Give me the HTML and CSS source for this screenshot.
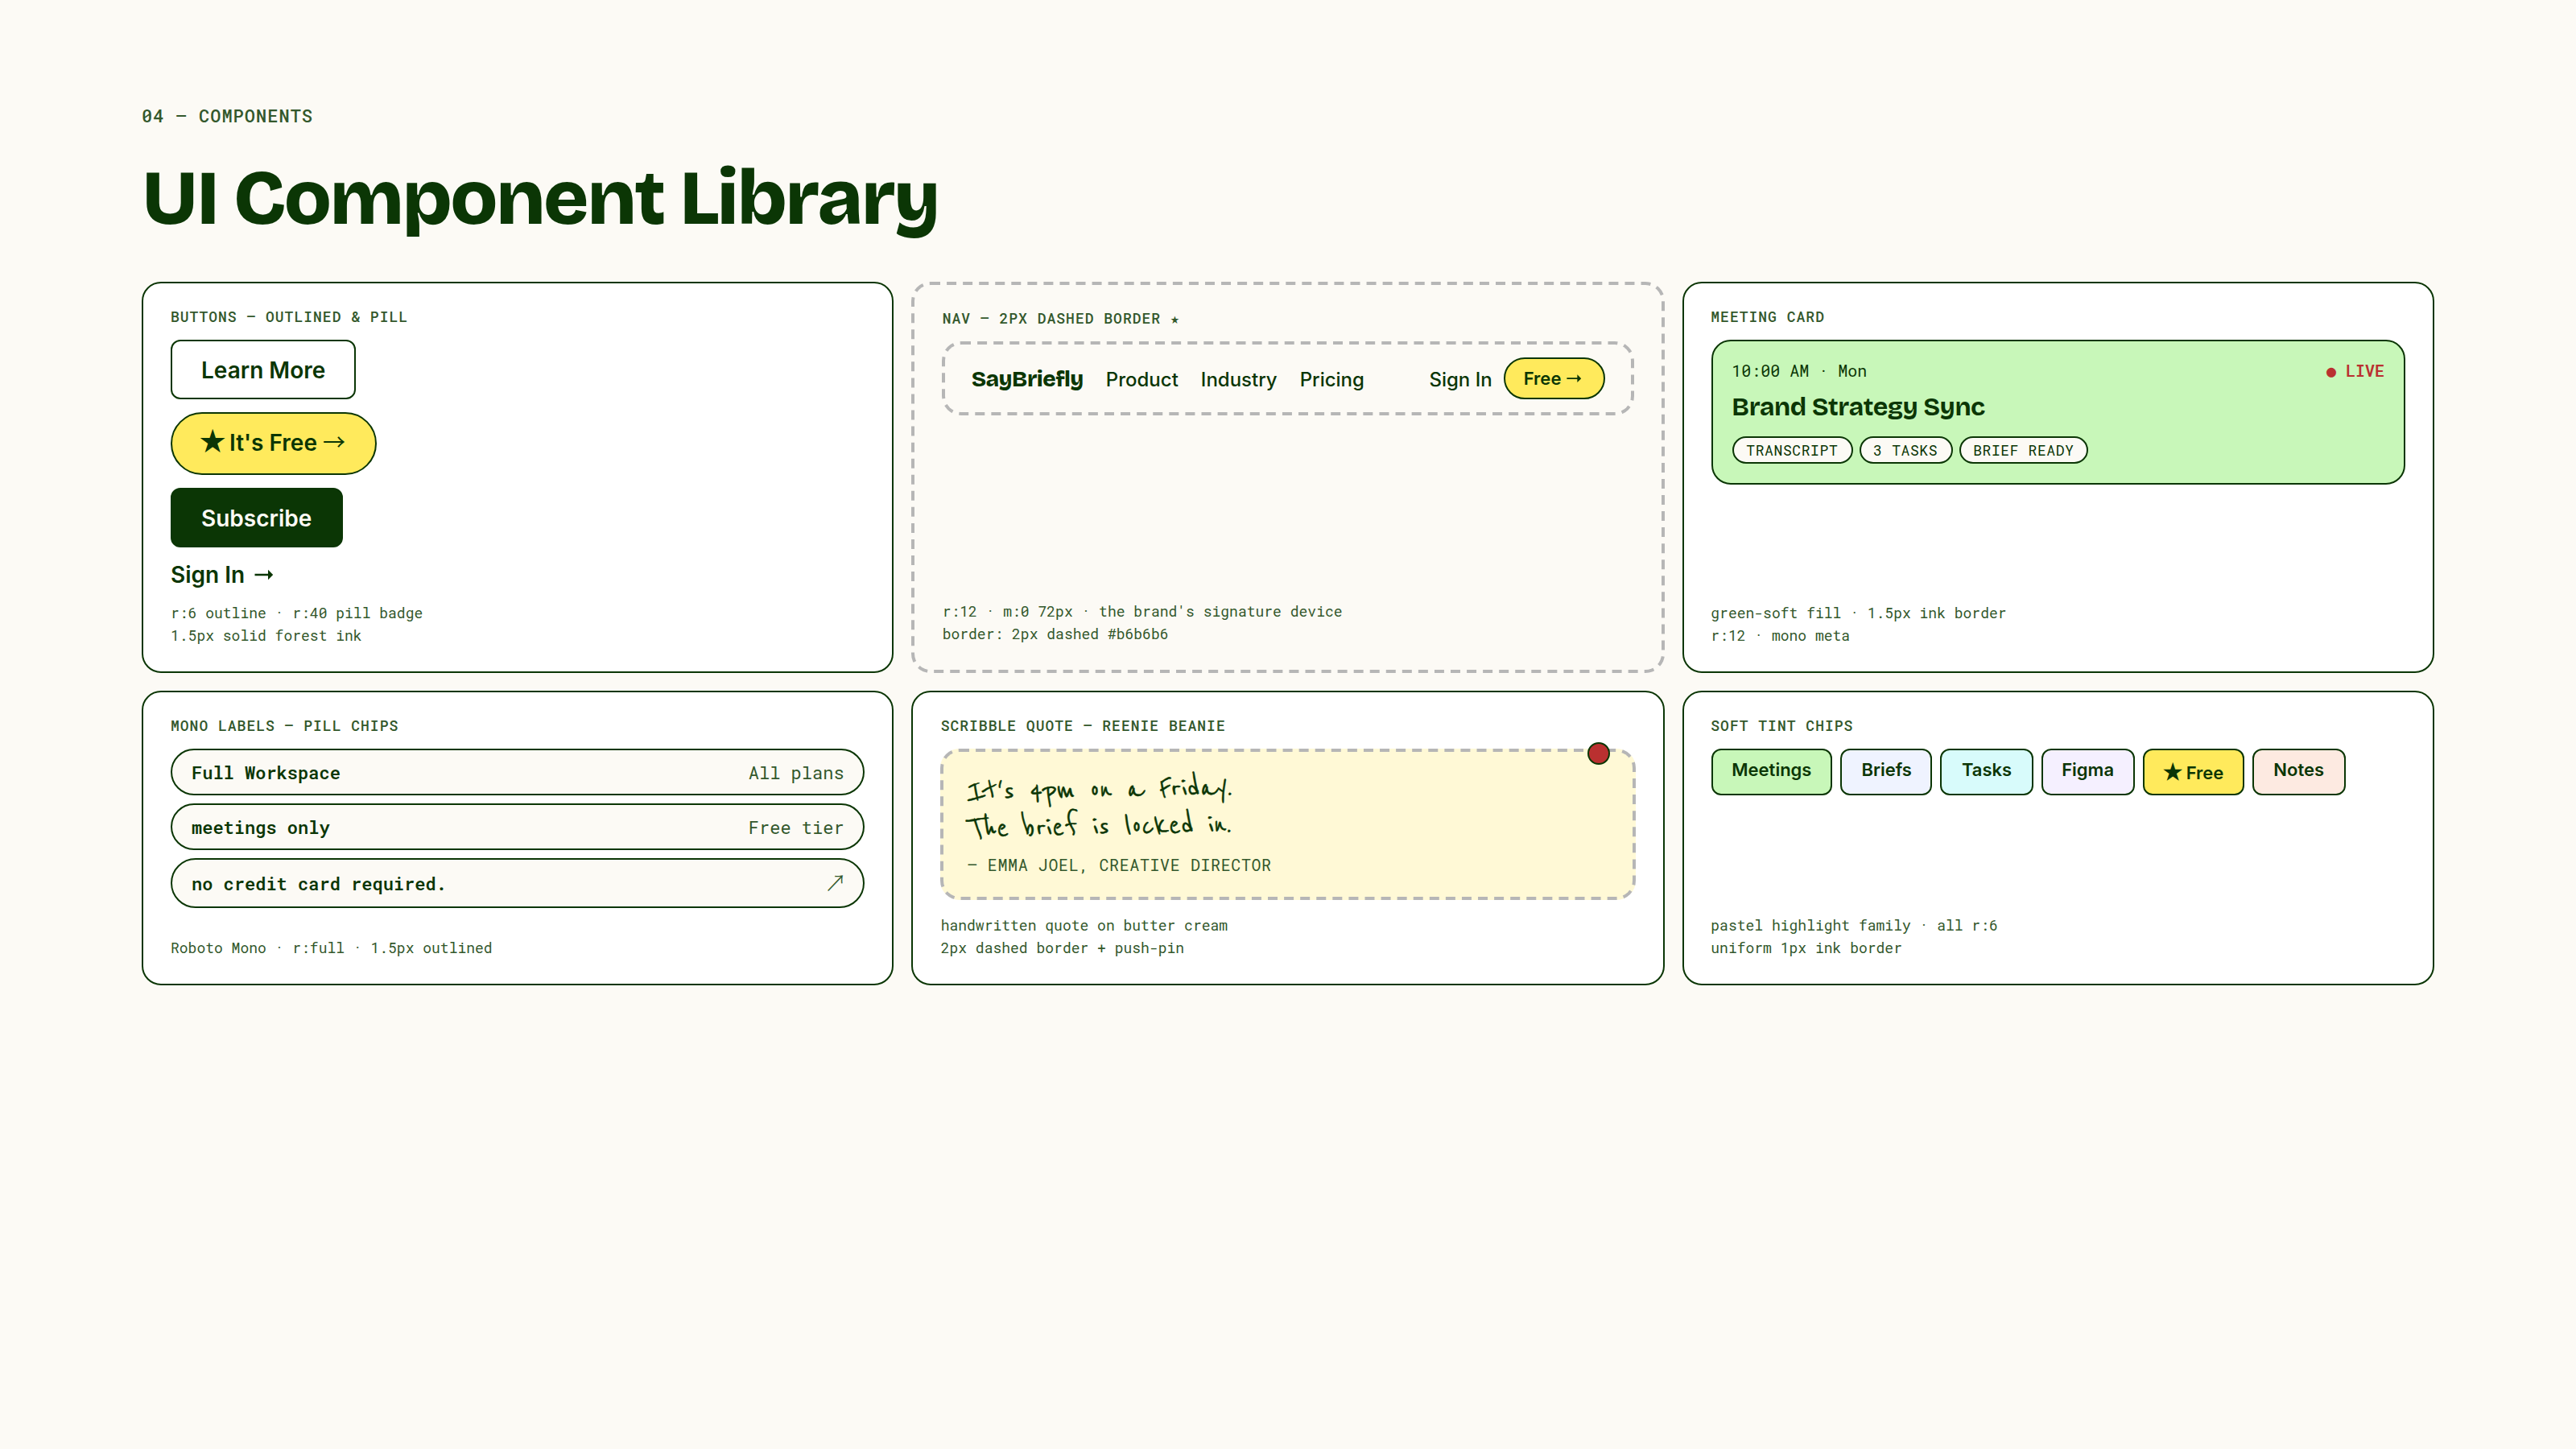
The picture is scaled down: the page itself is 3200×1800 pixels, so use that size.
FILE: index.html
```
<!DOCTYPE html>
<html lang="en">
<head>
    <meta charset="UTF-8">
    <meta name="viewport" content="width=device-width, initial-scale=1.0">
    <title>UI Component Library</title>
    <link rel="stylesheet" href="styles.css">
</head>
<body>
    <div class="page">
        <div class="eyebrow">04 — COMPONENTS</div>
        <h1>UI Component Library</h1>

        <div class="grid">
            <div class="card">
                <div class="label">BUTTONS — OUTLINED &amp; PILL</div>
                <div class="buttons">
                    <a class="btn">Learn More</a>
                    <a class="btn btn-pill"><span class="star">★</span> It's Free <span class="thin-arrow">→</span></a>
                    <a class="btn btn-solid">Subscribe</a>
                    <a class="btn-link">Sign In<svg class="arrow" viewBox="0 0 28 28"><path d="M0.5 16.8H17V11.7L23.2 18L17 24.3V19.2H0.5Z"/></svg></a>
                </div>
                <div class="note">r:6 outline · r:40 pill badge<br>1.5px solid forest ink</div>
            </div>

            <div class="card card-dashed">
                <div class="label">NAV — 2PX DASHED BORDER ★</div>
                <nav class="nav">
                    <span class="logo">SayBriefly</span>
                    <a>Product</a>
                    <a>Industry</a>
                    <a>Pricing</a>
                    <div class="nav-right">
                        <a>Sign In</a>
                        <a class="nav-pill">Free <svg class="arrow" viewBox="0 0 28 28"><path d="M0.5 16.8H17V11.7L23.2 18L17 24.3V19.2H0.5Z"/></svg></a>
                    </div>
                </nav>
                <div class="note">r:12 · m:0 72px · the brand's signature device<br>border: 2px dashed #b6b6b6</div>
            </div>

            <div class="card">
                <div class="label">MEETING CARD</div>
                <div class="meeting">
                    <div class="meeting-top">
                        <span>10:00 AM · Mon</span>
                        <span class="live">● LIVE</span>
                    </div>
                    <div class="meeting-title">Brand Strategy Sync</div>
                    <div class="tags">
                        <span class="tag">TRANSCRIPT</span>
                        <span class="tag">3 TASKS</span>
                        <span class="tag">BRIEF READY</span>
                    </div>
                </div>
                <div class="note">green-soft fill · 1.5px ink border<br>r:12 · mono meta</div>
            </div>

            <div class="card">
                <div class="label">MONO LABELS — PILL CHIPS</div>
                <div class="rows">
                    <div class="row"><b>Full Workspace</b><span>All plans</span></div>
                    <div class="row"><b>meetings only</b><span>Free tier</span></div>
                    <div class="row row-tall"><b>no credit card required.</b><span class="corner">↗</span></div>
                </div>
                <div class="note">Roboto Mono · r:full · 1.5px outlined</div>
            </div>

            <div class="card">
                <div class="label">SCRIBBLE QUOTE — REENIE BEANIE</div>
                <div class="quote">
                    <span class="pin"></span>
                    <div class="scribble">It's 4pm on a Friday.<br>The brief is locked in.</div>
                    <div class="author">— EMMA JOEL, CREATIVE DIRECTOR</div>
                </div>
                <div class="note">handwritten quote on butter cream<br>2px dashed border + push-pin</div>
            </div>

            <div class="card">
                <div class="label">SOFT TINT CHIPS</div>
                <div class="chips">
                    <span class="chip green">Meetings</span>
                    <span class="chip blue">Briefs</span>
                    <span class="chip cyan">Tasks</span>
                    <span class="chip violet">Figma</span>
                    <span class="chip yellow"><span class="star">★</span> Free</span>
                    <span class="chip peach">Notes</span>
                </div>
                <div class="note">pastel highlight family · all r:6<br>uniform 1px ink border</div>
            </div>
        </div>
    </div>
</body>
</html>
```
FILE: styles.css
```
:root {
    --ink: #0b3605;
    --ink-soft: #33582c;
    --paper: #fcfaf5;
    --yellow: #ffea5c;
    --green: #c8f7b9;
    --red: #ba3030;
    --dash: #b6b6b6;
    --mono: "Roboto Mono", "DejaVu Sans Mono", monospace;
    --sans: Inter, sans-serif;
    --display: "Bricolage Grotesque", Inter, sans-serif;
    --symbols: "Noto Sans CJK JP", sans-serif;
}

* {
    box-sizing: border-box;
}

body {
    margin: 0;
    height: 1800px;
    background: var(--paper);
}

/* 1600x900 board, shown at double size */
.page {
    width: 1600px;
    height: 900px;
    padding: 64px 88px 0;
    transform: scale(2);
    transform-origin: 0 0;
    color: var(--ink);
    font-family: var(--sans);
}

.eyebrow {
    font-family: var(--mono);
    font-size: 11px;
    font-weight: 500;
    letter-spacing: 0.5px;
    line-height: 15px;
    color: var(--ink-soft);
}

h1 {
    margin: 20px 0 0;
    height: 76px;
    font-family: var(--display);
    font-size: 48px;
    font-weight: 800;
    line-height: 48px;
    letter-spacing: -1.2px;
    white-space: nowrap;
}

.grid {
    display: grid;
    grid-template-columns: repeat(3, 1fr);
    gap: 11px;
}

.card {
    display: flex;
    flex-direction: column;
    gap: 8px;
    padding: 15px 17px;
    border: 1px solid var(--ink);
    border-radius: 12px;
    background: #fff;
}

.card-dashed {
    border: 2px dashed var(--dash);
    background: var(--paper);
}

.label {
    font-family: var(--mono);
    font-size: 9px;
    font-weight: 500;
    line-height: 12px;
    letter-spacing: 0.5px;
    color: var(--ink-soft);
}

.note {
    margin-top: auto;
    padding-top: 0.8px;
    font-family: var(--mono);
    font-size: 9px;
    line-height: 14px;
    color: var(--ink-soft);
}

/* symbols */
.star {
    margin: 0 -0.075em 0 -0.07em;
    font-family: var(--symbols);
    font-size: 1.17em;
    line-height: 0;
}

.thin-arrow {
    font-family: var(--symbols);
    font-weight: 400;
    line-height: 0;
}

.corner {
    margin-right: -1.5px;
    font-family: var(--symbols);
    font-size: 14px;
    font-weight: 300;
    line-height: 0;
}

.arrow {
    width: 1em;
    height: 1em;
    fill: currentColor;
}

/* buttons */
.buttons {
    display: flex;
    flex-direction: column;
    align-items: flex-start;
    gap: 8px;
}

.btn {
    padding: 9px 18px;
    border: 1px solid var(--ink);
    border-radius: 6px;
    font-size: 14px;
    font-weight: 600;
    line-height: 17px;
}

.btn-pill {
    padding-bottom: 11px;
    border-radius: 40px;
    background: var(--yellow);
}

.btn-solid {
    background: var(--ink);
    color: var(--paper);
}

.btn-link {
    height: 17px;
    font-size: 14px;
    font-weight: 600;
    line-height: 17px;
}

.btn-link .arrow {
    margin-left: 6px;
}

/* nav */
.nav {
    display: flex;
    align-items: center;
    gap: 14px;
    height: 46px;
    padding: 0 16px;
    border: 2px dashed var(--dash);
    border-radius: 12px;
    font-size: 12px;
    font-weight: 500;
}

.logo {
    font-family: var(--display);
    font-size: 14px;
    font-weight: 800;
    letter-spacing: -0.02em;
}

.nav-right {
    display: flex;
    align-items: center;
    gap: 7.5px;
    margin-left: auto;
}

.nav-pill {
    height: 26px;
    padding: 5px 11.5px 5px 11px;
    border: 1px solid var(--ink);
    border-radius: 40px;
    background: var(--yellow);
    font-size: 11px;
    font-weight: 600;
    line-height: 14px;
}

.nav-pill .arrow {
    margin-left: 0.7px;
}

/* meeting card */
.meeting {
    height: 90px;
    padding: 12px;
    border: 1px solid var(--ink);
    border-radius: 12px;
    background: var(--green);
}

.meeting-top {
    display: flex;
    justify-content: space-between;
    font-family: var(--mono);
    font-size: 10px;
    line-height: 13px;
}

.live {
    color: var(--red);
    font-weight: 600;
}

.meeting-title {
    margin: 6px 0 9px;
    font-family: var(--display);
    font-size: 16px;
    font-weight: 700;
    line-height: 19px;
    letter-spacing: -0.015em;
}

.tags {
    display: flex;
    gap: 4px;
}

.tag {
    padding: 1.5px 8px;
    border: 1px solid var(--ink);
    border-radius: 20px;
    background: var(--paper);
    font-family: var(--mono);
    font-size: 9px;
    line-height: 12px;
    letter-spacing: 0.3px;
}

/* mono rows */
.rows {
    display: flex;
    flex-direction: column;
    gap: 5px;
}

.row {
    display: flex;
    justify-content: space-between;
    align-items: center;
    height: 29px;
    padding: 0 12px;
    border: 1px solid var(--ink);
    border-radius: 30px;
    background: var(--paper);
    font-family: var(--mono);
    font-size: 11px;
    line-height: 15px;
}

.row-tall {
    height: 31px;
}

.row b {
    font-weight: 600;
}

.row span {
    color: var(--ink-soft);
}

/* quote */
.quote {
    position: relative;
    height: 94px;
    padding: 12px 14.5px;
    border: 2px dashed var(--dash);
    border-radius: 12px;
    background: #fff9d6;
}

.pin {
    position: absolute;
    top: -6px;
    right: 14px;
    width: 14px;
    height: 14px;
    border: 1px solid var(--ink);
    border-radius: 50%;
    background: var(--red);
}

.scribble {
    width: max-content;
    font-family: "Reenie Beanie", cursive;
    font-size: 22px;
    font-weight: 600;
    line-height: 23px;
    -webkit-text-stroke: 0.25px var(--ink);
    transform: rotate(-1deg);
}

.author {
    margin-top: 6px;
    font-family: var(--mono);
    font-size: 10px;
    line-height: 13px;
    letter-spacing: 0.3px;
    color: var(--ink-soft);
}

/* chips */
.chips {
    display: flex;
    gap: 5px;
}

.chip {
    padding: 6px 12px;
    border: 1px solid var(--ink);
    border-radius: 6px;
    font-size: 11px;
    font-weight: 600;
    line-height: 13px;
}

.green {
    background: var(--green);
}

.blue {
    background: #eff3ff;
}

.cyan {
    background: #d8fbfb;
}

.violet {
    background: #f5f0ff;
}

.yellow {
    padding-top: 8px;
    background: var(--yellow);
}

.peach {
    background: #fdeae1;
}
```
